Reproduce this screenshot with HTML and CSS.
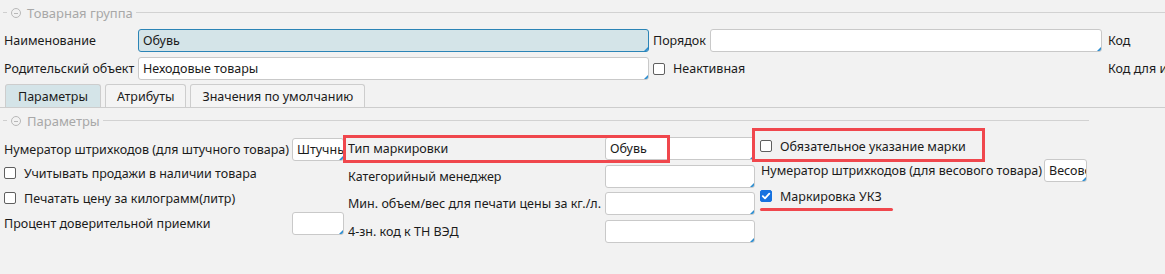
FILE: index.html
```html
<!DOCTYPE html>
<html lang="ru">
<head>
    <meta charset="UTF-8">
    <title>Товарная группа</title>
    <link rel="stylesheet" href="styles.css">
</head>
<body>
    <div class="group-head">
        <span class="tick"></span>
        <span class="collapse-icon"></span>
        <span class="group-title">Товарная группа</span>
        <span class="group-line"></span>
    </div>

    <div class="top-form">
        <div class="label">Наименование</div>
        <div class="field active">Обувь</div>
        <div class="label pad">Порядок</div>
        <div class="field"></div>
        <div class="label pad-wide">Код</div>

        <div class="label">Родительский объект</div>
        <div class="field">Неходовые товары</div>
        <div class="check-row pad span2"><span class="check"></span>Неактивная</div>
        <div class="label pad-wide">Код для использования</div>
    </div>

    <div class="tabs">
        <div class="tab selected">Параметры</div>
        <div class="tab">Атрибуты</div>
        <div class="tab">Значения по умолчанию</div>
    </div>

    <div class="params">
        <div class="group-head">
            <span class="tick"></span>
            <span class="collapse-icon"></span>
            <span class="group-title">Параметры</span>
            <span class="group-line"></span>
        </div>

        <div class="params-body">
            <div class="col col-1">
                <div class="label">Нумератор штрихкодов (для штучного товара)</div>
                <div class="field">Штучный</div>
                <div class="check-row span2"><span class="check"></span>Учитывать продажи в наличии товара</div>
                <div class="check-row span2"><span class="check"></span>Печатать цену за килограмм(литр)</div>
                <div class="label">Процент доверительной приемки</div>
                <div class="field"></div>
            </div>

            <div class="col col-2">
                <div class="label">Тип маркировки</div>
                <div class="field">Обувь</div>
                <div class="label">Категорийный менеджер</div>
                <div class="field"></div>
                <div class="label">Мин. объем/вес для печати цены за кг./л.</div>
                <div class="field"></div>
                <div class="label">4-зн. код к ТН ВЭД</div>
                <div class="field"></div>
            </div>

            <div class="col col-3">
                <div class="check-row span2"><span class="check"></span>Обязательное указание марки</div>
                <div class="label">Нумератор штрихкодов (для весового товара)</div>
                <div class="field">Весовой</div>
                <div class="check-row span2"><span class="check checked"><svg viewBox="0 0 12 12" width="12" height="12"><path d="M2.8 6.2 L5 8.4 L9.3 3.6" fill="none" stroke="#fff" stroke-width="1.8" stroke-linecap="round" stroke-linejoin="round"/></svg></span>Маркировка УКЗ</div>
            </div>

            <!-- red marks -->
            <div class="mark mark-type"></div>
            <div class="mark mark-required"></div>
            <div class="mark-underline"></div>
        </div>
    </div>
</body>
</html>
```

FILE: styles.css
```css
/* general */
body {
    margin: 0;
    background-color: #f2f2f2;
    color: #1b1b1b;
    font-family: 'Noto Sans', sans-serif;
    font-size: 12.5px;
    overflow: hidden;
    width: 1165px;
    height: 274px;
}

/* collapsible group header */
.group-head {
    display: flex;
    align-items: center;
    height: 26px;
    color: #a8a8a8;
}

.tick {
    width: 4px;
    height: 1px;
    margin-left: 3px;
    margin-top: -2px;
    background-color: #cfcfcf;
}

.collapse-icon {
    width: 8px;
    height: 8px;
    margin-left: 4px;
    border: 1.5px solid #b8b8b8;
    border-radius: 50%;
    position: relative;
}

.collapse-icon::after {
    content: "";
    position: absolute;
    left: 2px;
    right: 2px;
    top: 3.5px;
    height: 1px;
    background-color: #b8b8b8;
}

.group-title {
    margin-left: 6px;
    font-size: 13px;
    white-space: nowrap;
}

.group-line {
    flex: 1;
    height: 1px;
    margin-left: 3px;
    margin-top: -2px;
    background-color: #d2d2d2;
}

/* labels and fields */
.label {
    display: flex;
    align-items: center;
    white-space: nowrap;
    overflow: hidden;
}

.field {
    position: relative;
    display: flex;
    align-items: center;
    box-sizing: border-box;
    height: 23px;
    padding-left: 4px;
    background-color: #fff;
    border: 1px solid #c9c9c9;
    border-radius: 3px;
    white-space: nowrap;
    overflow: hidden;
}

.field::after {
    content: "";
    position: absolute;
    right: 0;
    bottom: 0;
    border-style: solid;
    border-width: 0 0 4px 4px;
    border-color: transparent transparent #2a8ccf transparent;
}

.field.active {
    background-color: #d4e4e8;
    border-color: #2b84b6;
}

.check-row {
    display: flex;
    align-items: center;
    white-space: nowrap;
}

.check {
    box-sizing: border-box;
    width: 12px;
    height: 12px;
    margin-right: 8px;
    background-color: #fff;
    border: 1px solid #5f5f5f;
    border-radius: 2px;
    display: flex;
}

.check.checked {
    background-color: #1672e0;
    border-color: #1672e0;
}

.check svg {
    margin: -1px;
}

.span2 {
    grid-column: span 2;
}

.pad {
    padding-left: 4px;
}

.pad-wide {
    padding-left: 6px;
}

/* top form */
.top-form {
    display: grid;
    grid-template-columns: 134px 511px 61px 392px auto;
    grid-template-rows: 23px 23px;
    row-gap: 5px;
    margin-top: 3px;
    padding-left: 4px;
}

/* tabs */
.tabs {
    display: flex;
    gap: 4px;
    margin-top: 4px;
    padding-left: 5px;
    border-bottom: 1px solid #cdcdcd;
}

.tab {
    height: 23px;
    padding: 0 11px;
    display: flex;
    align-items: center;
    box-sizing: border-box;
    border: 1px solid #cdcdcd;
    border-bottom: none;
    border-radius: 3px 3px 0 0;
    background-color: #f4f4f4;
}

.tab.selected {
    background-color: #d4e4e8;
    padding: 0 12px;
}

/* parameters */
.params {
    width: 1089px;
}

.params-body {
    position: relative;
    display: flex;
}

.col {
    display: grid;
    align-content: start;
}

.col-1 {
    width: 340px;
    padding-left: 4px;
    padding-top: 3px;
    grid-template-columns: 288px 52px;
    grid-template-rows: 24px 24px 26px 24px;
}

.col-1 .field,
.col-3 .field {
    align-self: center;
    height: 23px;
}

.col-2 {
    width: 407px;
    padding-left: 4px;
    padding-top: 1px;
    grid-template-columns: 257px 150px;
    grid-template-rows: 27px 28px 27px 28px;
}

.col-2 .field {
    align-self: center;
}

.col-3 {
    padding-left: 5px;
    grid-template-columns: 284px 43px;
    grid-template-rows: 24px 25px 26px;
}

.col-3 .label {
    padding-left: 1px;
}

/* red annotation marks */
.mark {
    position: absolute;
    box-sizing: border-box;
    border: 3px solid #f0474d;
}

.mark-type {
    left: 343px;
    top: 1px;
    width: 327px;
    height: 28px;
}

.mark-required {
    left: 752px;
    top: -6px;
    width: 233px;
    height: 34px;
}

.mark-underline {
    position: absolute;
    left: 760px;
    top: 74px;
    width: 133px;
    height: 3px;
    border-radius: 2px;
    background-color: #f0474d;
}
```
